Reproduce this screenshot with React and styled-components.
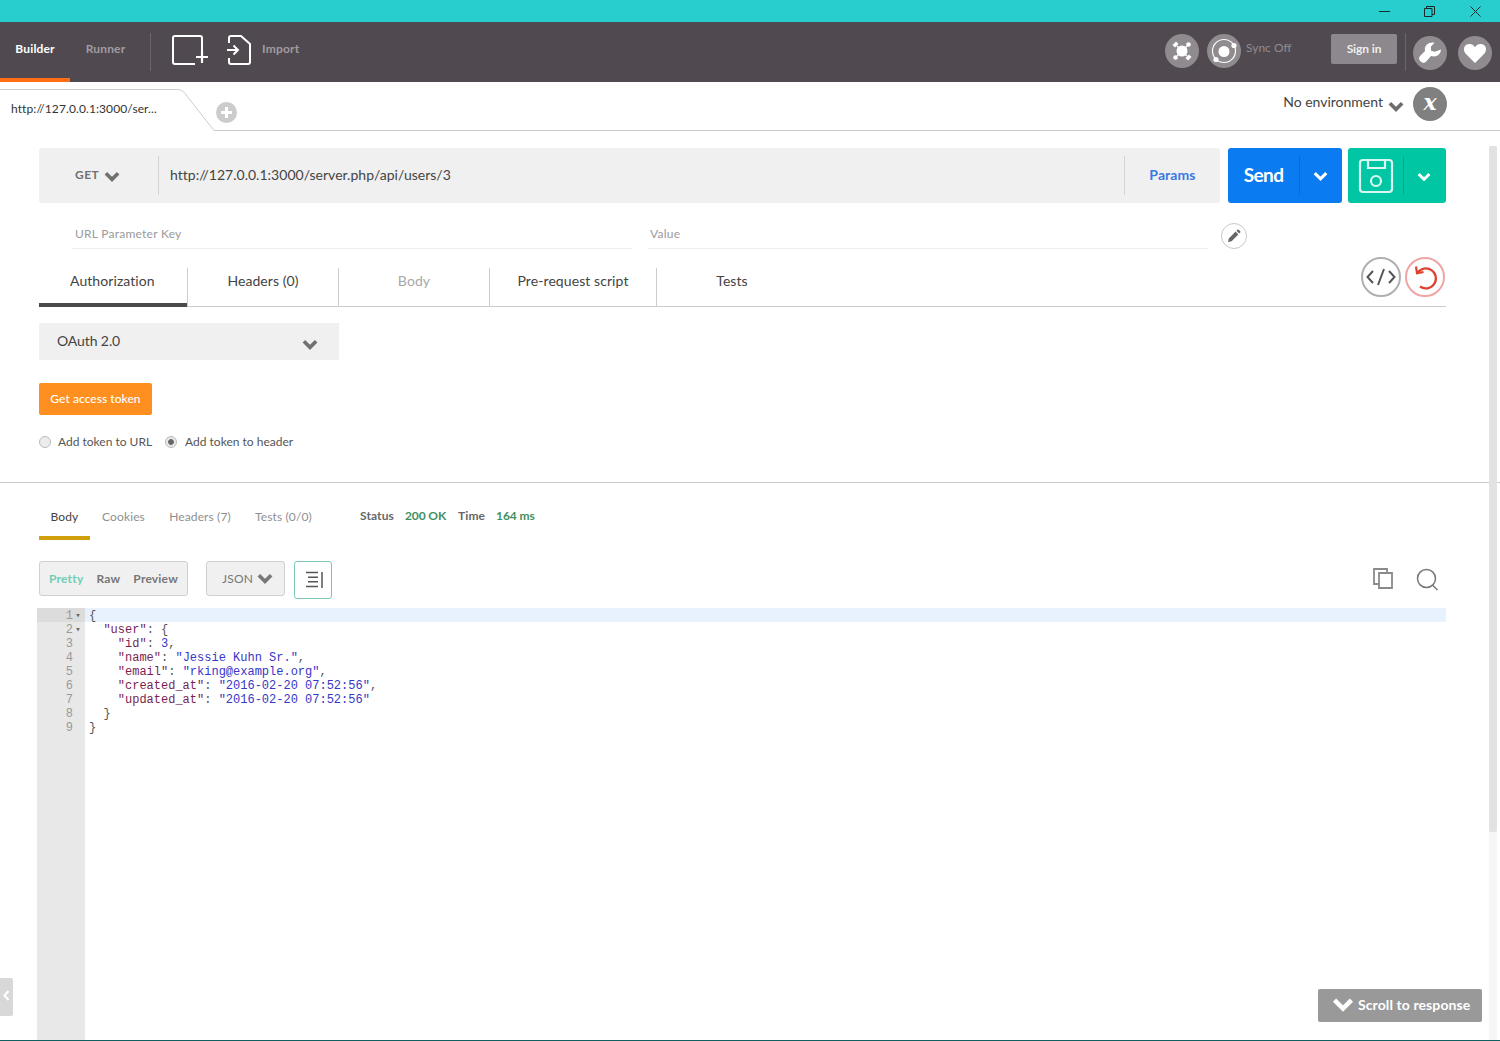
import React from "react";
import styled, { createGlobalStyle } from "styled-components";

const Global = createGlobalStyle`
  html, body { margin: 0; padding: 0; background: #fff; }
  body { font-family: Lato, "Open Sans", sans-serif; -webkit-font-smoothing: antialiased; }
  * { box-sizing: border-box; }
`;

const Page = styled.div`
  position: relative; width: 1500px; height: 1041px; overflow: hidden; background: #fff;
  display: flex; flex-direction: column; border-bottom: 1px solid #0f5f5f;
`;

/* Title bar */
const TitleBar = styled.div`
  height: 22px; flex: none; background: #28cdcd; display: flex; justify-content: flex-end; align-items: center;
`;
const WinBtn = styled.div`
  width: ${p => p.$w}px; height: 22px; display: flex; align-items: center; justify-content: center;
`;

/* Navigation */
const Nav = styled.header`
  height: 60px; flex: none; background: #504a50; display: flex; align-items: stretch; position: relative;
`;
const NavTab = styled.div`
  width: ${p => p.$w}px; height: 60px; display: flex; align-items: center; justify-content: center;
  padding-bottom: 4px; font-size: 12px; font-weight: 700; letter-spacing: .15px;
  color: ${p => (p.$active ? "#fff" : "#a09ca0")};
  border-bottom: 4px solid ${p => (p.$active ? "#ff6d14" : "transparent")};
`;
const NavDivider = styled.div`
  width: 1px; height: 38px; background: #6a656a; align-self: flex-start; margin: ${p => p.$t ?? 11}px ${p => p.$r || 0}px 0 ${p => p.$l || 0}px;
`;
const NavIconSlot = styled.div`
  display: flex; align-items: center; height: 56px; margin-left: ${p => p.$l || 0}px; color: #fff;
`;
const ImportLabel = styled.span`
  font-size: 12px; font-weight: 700; color: #a09ca0; margin-left: 11px; position: relative; top: -2px; letter-spacing: .2px;
`;
const NavRight = styled.div`
  margin-left: auto; display: flex; align-items: flex-start; padding-top: 12px; padding-right: 8px;
`;
const CircleBtn = styled.div`
  width: 34px; height: 34px; border-radius: 50%; background: ${p => p.$bg || "#8f8b8f"};
  display: flex; align-items: center; justify-content: center; flex: none;
  margin: ${p => p.$m || 0};
`;
const SyncLabel = styled.span`
  font-size: 12px; color: #8f8b8f; margin: 6px 40px 0 5px; width: 45px; white-space: nowrap;
`;
const SignIn = styled.div`
  width: 66px; height: 30px; border-radius: 2px; background: #8d888d; color: #eee; font-size: 12px; font-weight: 700;
  display: flex; align-items: center; justify-content: center; margin-right: 8px;
  padding-bottom: 1px; letter-spacing: -.1px;
`;

/* Tab strip */
const TabStrip = styled.div`
  height: 49px; flex: none; position: relative; display: flex; align-items: flex-start;
  border-bottom: 1px solid #ccc;
`;
const TabShape = styled.svg`
  position: absolute; left: 0; top: 7px;
`;
const TabLabel = styled.div`
  position: relative; margin: 20px 0 0 11px; width: 176px; font-size: 12px; color: #333; white-space: nowrap; line-height: 14px; letter-spacing: .1px;
`;
const AddTab = styled.div`
  position: relative; margin: 20px 0 0 29px; width: 21px; height: 21px; border-radius: 50%; background: #ccc;
  display: flex; align-items: center; justify-content: center;
`;
const EnvWrap = styled.div`
  margin-left: auto; display: flex; align-items: flex-start; padding: 5px 53px 0 0;
`;
const EnvText = styled.span`
  font-size: 14px; color: #444; margin: 6px 5px 0 0; line-height: 17px;
`;
const EnvChevron = styled.span`
  margin: 14px 9px 0 0; display: flex;
`;
const XGlyph = styled.span`
  color: #fff; font-family: "DejaVu Serif", serif; font-style: italic; font-weight: 700; font-size: 22px; line-height: 26px; position: relative; top: -2px;
`;

/* Main */
const Main = styled.main`
  padding: 17px 54px 0 39px; flex: none;
`;
const RequestRow = styled.div`
  display: flex; height: 55px;
`;
const UrlBar = styled.div`
  width: 1181px; background: #f0f0f0; border-radius: 3px; display: flex; align-items: center;
`;
const Method = styled.div`
  width: 120px; height: 39px; padding: 0 0 3px 36px; display: flex; align-items: center; font-size: 12px; font-weight: 700;
  color: #707070; letter-spacing: .5px; border-right: 1px solid #d4d4d4; gap: 5px;
`;
const MethodChevron = styled.span`
  display: flex; margin-top: 6px;
`;
const UrlText = styled.div`
  flex: 1; padding-left: 11px; font-size: 14px; color: #444; height: 39px; line-height: 37px; letter-spacing: .02px;
`;
const ParamsBtn = styled.div`
  width: 96px; height: 39px; line-height: 37px; border-left: 1px solid #d4d4d4; text-align: center;
  color: #3a78e4; font-weight: 700; font-size: 14px; letter-spacing: .1px;
`;
const SplitBtn = styled.div`
  width: ${p => p.$w}px; margin-left: ${p => p.$ml}px; background: ${p => p.$bg}; border-radius: 3px; display: flex; align-items: center;
  color: #fff;
`;
const SplitMain = styled.div`
  width: ${p => p.$w}px; height: 39px; border-right: 1px solid rgba(0,0,0,.14); display: flex; align-items: center; justify-content: center;
  font-weight: 700; font-size: 19px; letter-spacing: -.6px; padding-bottom: ${p => (p.$icon ? 0 : 2)}px;
`;
const SplitArrow = styled.div`
  flex: 1; display: flex; align-items: center; justify-content: center; padding: 2px 2px 0 0;
`;

const ParamRow = styled.div`
  display: flex; margin: 19px 0 0 33px; align-items: flex-start;
`;
const ParamField = styled.div`
  width: 560px; height: 27px; margin-right: 16px; border-bottom: 1px solid #eee; padding-left: ${p => p.$pl}px;
  font-size: 12px; color: #9a9a9a; line-height: 23px; letter-spacing: .25px;
`;
const EditBtn = styled.div`
  width: 26px; height: 26px; border-radius: 50%; border: 1px solid #c8c8c8; margin: 1px 0 0 -3px;
  display: flex; align-items: center; justify-content: center;
`;

const TabsBar = styled.div`
  display: flex; align-items: stretch; height: 39px; margin-top: 19px; border-bottom: 1px solid #ccc; position: relative;
`;
const ReqTab = styled.div`
  width: ${p => p.$w}px; font-size: 14px; display: flex; align-items: flex-start; justify-content: ${p => p.$left ? "flex-start" : "center"};
  padding-top: 4px; line-height: 17px; padding-left: ${p => p.$left || 0}px; letter-spacing: .08px;
  color: ${p => (p.$muted ? "#a8a8a8" : "#444")};
  border-right: ${p => (p.$noBorder ? "0" : "1px solid #ccc")};
  ${p => p.$active && "box-shadow: inset 0 -4px 0 #4a4a4a; margin-bottom: -1px;"}
`;
const TabTools = styled.div`
  margin-left: auto; display: flex; gap: 4px; padding-right: 1px; margin-top: -11px;
`;
const RoundTool = styled.div`
  width: 40px; height: 40px; border-radius: 50%; border: 2px solid ${p => p.$c}; display: flex; align-items: center; justify-content: center;
`;

const AuthSelect = styled.div`
  width: 300px; height: 37px; margin-top: 16px; background: #f0f0f0; display: flex; align-items: center; justify-content: space-between;
  padding: 0 21px 2px 18px; font-size: 14px; color: #444; letter-spacing: -.1px;
`;
const AuthChevron = styled.span`
  display: flex; margin-top: 9px;
`;
const TokenBtn = styled.div`
  width: 113px; height: 32px; margin-top: 23px; background: #ff901f; border-radius: 2px; color: #fff; font-size: 12px;
  display: flex; align-items: center; justify-content: center; font-weight: 500; padding-bottom: 2px; letter-spacing: .05px;
`;
const RadioRow = styled.div`
  display: flex; align-items: center; margin-top: 19px; height: 16px; font-size: 12px; color: #555;
`;
const Radio = styled.span`
  width: 12px; height: 12px; border-radius: 50%; border: 1px solid #bbb; background: ${p => p.$on ? "radial-gradient(circle, #666 0 2.5px, #e8e8e8 3.2px)" : "#ececec"};
  margin-right: ${p => p.$mr}px; flex: none;
`;
const RadioLabel = styled.span`
  margin-right: 13px; position: relative; top: -1px;
`;

const Divider = styled.div`
  height: 1px; background: #ccc; margin-top: 32px; flex: none;
`;

/* Response */
const Response = styled.section`
  flex: 1; min-height: 0; display: flex; flex-direction: column; padding-left: 39px; padding-right: 54px;
`;
const RespHead = styled.div`
  display: flex; height: 57px; align-items: flex-start; font-size: 12px;
`;
const RespTab = styled.div`
  height: 57px; padding-top: 26px; line-height: 15px; text-align: center; width: ${p => p.$w}px; letter-spacing: .12px;
  color: ${p => (p.$active ? "#444" : "#8f8f8f")};
  ${p => p.$active && "border-bottom: 4px solid #d09f0a;"}
`;
const StatusLabel = styled.span`
  margin-top: 25px; line-height: 15px; font-weight: 700; color: #666; margin-left: ${p => p.$l}px; letter-spacing: .1px;
`;
const StatusValue = styled.span`
  margin-top: 25px; line-height: 15px; font-weight: 700; color: #3f8f63; margin-left: ${p => p.$l}px; letter-spacing: -.1px;
`;
const ToolRow = styled.div`
  display: flex; align-items: flex-start; height: 47px; margin-top: 21px;
`;
const Segment = styled.div`
  width: ${p => p.$w}px; height: 35px; background: #f0f0f0; border: 1px solid #d0d0d0; border-radius: 3px; display: flex; align-items: center;
  font-size: 12px; font-weight: 700; color: #777; margin-right: ${p => p.$mr}px;
  padding-left: ${p => p.$pl}px; letter-spacing: .2px;
`;
const SegItem = styled.span`
  margin-right: ${p => p.$mr || 0}px; color: ${p => p.$c || "#777"}; font-weight: ${p => p.$fw || 700};
`;
const WrapBtn = styled.div`
  width: 38px; height: 38px; border-radius: 3px; border: 1px solid #7cc7b5; display: flex; align-items: center; justify-content: center;
`;
const ToolRight = styled.div`
  margin-left: auto; display: flex; align-items: flex-start; gap: 23px; margin-top: 7px; margin-right: 8px;
`;

const Editor = styled.div`
  flex: 1; display: flex; margin-left: -2px; font-family: "Liberation Mono", monospace; font-size: 12px; line-height: 14px; overflow: hidden;
`;
const Gutter = styled.div`
  width: 48px; flex: none; background: #e8e8e8; color: #999; font-size: 12px;
`;
const GutterLine = styled.div`
  height: 14px; display: flex; align-items: center; justify-content: flex-end; padding: 1px 2px 0 0;
  background: ${p => p.$on ? "#dcdcdc" : "transparent"};
`;
const Fold = styled.span`
  width: 10px; font-size: 9px; text-align: center; color: #666; line-height: 14px;
`;
const Code = styled.div`
  flex: 1;
`;
const CodeLine = styled.div`
  height: 14px; padding: 1px 0 0 4px; white-space: pre; color: #555; background: ${p => p.$on ? "#e8f2ff" : "transparent"};
`;
const Key = styled.span` color: #7a1f52; `;
const Str = styled.span` color: #3636c8; `;

const Scrollbar = styled.div`
  position: absolute; top: 146px; right: 3px; width: 8px; bottom: 0; background: #f6f6f6;
`;
const ScrollThumb = styled.div`
  height: 686px; background: #e2e2e2; border-radius: 2px;
`;
const ScrollTo = styled.div`
  position: absolute; left: 1318px; top: 989px; width: 164px; height: 33px; background: #999; border-radius: 2px;
  color: #fff; font-size: 14px; font-weight: 700; display: flex; align-items: center; padding: 0 0 2px 14px; gap: 4px; letter-spacing: .1px;
`;
const SideHandle = styled.div`
  position: absolute; left: 0; top: 978px; width: 13px; height: 38px; background: #d8d8d8; border-radius: 0 2px 2px 0;
  display: flex; align-items: center; justify-content: center; padding: 0 1px 4px 0;
`;

const Chevron = ({ s = 14, w = 3, c = "currentColor" }) => (
  <svg width={s} height={s * 0.7} viewBox="0 0 14 10" fill="none">
    <path d="M1.5 2 7 7.500 12.500 2" stroke={c} strokeWidth={w} />
  </svg>
);

const LINES = [
  <>{"{"}</>,
  <>{"  "}<Key>"user"</Key>: {"{"}</>,
  <>{"    "}<Key>"id"</Key>: <Str>3</Str>,</>,
  <>{"    "}<Key>"name"</Key>: <Str>"Jessie Kuhn Sr."</Str>,</>,
  <>{"    "}<Key>"email"</Key>: <Str>"rking@example.org"</Str>,</>,
  <>{"    "}<Key>"created_at"</Key>: <Str>"2016-02-20 07:52:56"</Str>,</>,
  <>{"    "}<Key>"updated_at"</Key>: <Str>"2016-02-20 07:52:56"</Str></>,
  <>{"  }"}</>,
  <>{"}"}</>,
];

export default function App() {
  return (
    <Page>
      <Global />
      <TitleBar>
        <WinBtn $w={48}>
          <svg width="11" height="11" viewBox="0 0 11 11"><path d="M0 5.500h11" stroke="#1a2a2a" strokeWidth="1" /></svg>
        </WinBtn>
        <WinBtn $w={42}>
          <svg width="11" height="11" viewBox="0 0 11 11" fill="none" stroke="#1a2a2a"><path d="M.5 2.500h7.500v8H.5zM2.500 2.500V.5h8v8H8" /></svg>
        </WinBtn>
        <WinBtn $w={50}>
          <svg width="11" height="11" viewBox="0 0 11 11" fill="none" stroke="#1a2a2a"><path d="M.5.5l10 10M10.500.5l-10 10" /></svg>
        </WinBtn>
      </TitleBar>

      <Nav>
        <NavTab $w={70} $active>Builder</NavTab>
        <NavTab $w={71}>Runner</NavTab>
        <NavDivider $l={9} />
        <NavIconSlot $l={21}>
          <svg width="37" height="30" viewBox="0 0 37 30" fill="none" stroke="#fff" strokeWidth="2">
            <path d="M30 18V3a2 2 0 0 0-2-2H3a2 2 0 0 0-2 2v24a2 2 0 0 0 2 2h20" />
            <path d="M24 22h12M30 16v12" strokeWidth="2.200" />
          </svg>
        </NavIconSlot>
        <NavIconSlot $l={18}>
          <svg width="24" height="30" viewBox="0 0 24 30" fill="none" stroke="#fff" strokeWidth="2">
            <path d="M2 8V3a2 2 0 0 1 2-2h10l9 8v18a2 2 0 0 1-2 2H4a2 2 0 0 1-2-2v-4" />
            <path d="M0 15h10M6.500 10.500l4.500 4.500-4.500 4.500" />
          </svg>
        </NavIconSlot>
        <NavIconSlot>
          <ImportLabel>Import</ImportLabel>
        </NavIconSlot>
        <NavRight>
          <CircleBtn>
            <svg width="26" height="26" viewBox="0 0 26 26" fill="#fff" stroke="#fff">
              <circle cx="13" cy="13" r="5.500" stroke="none" />
              <path d="M8 8l10 10M18 8 8 18" strokeWidth="1.400" />
              <path d="M3.500 7 7 3.500 9.500 6 6 9.500zM22.500 19 19 22.500 16.500 20l3.500-3.500z" stroke="none" />
              <circle cx="19.500" cy="6.500" r="2.300" stroke="none" />
              <circle cx="6.500" cy="19.500" r="2.300" stroke="none" />
            </svg>
          </CircleBtn>
          <CircleBtn $m="0 0 0 8px">
            <svg width="30" height="30" viewBox="0 0 30 30" fill="none">
              <circle cx="15" cy="15" r="11.500" stroke="#fff" strokeWidth="1.200" />
              <circle cx="15" cy="15.500" r="5.500" fill="#fff" />
              <circle cx="25" cy="9.500" r="2.600" fill="#fff" />
              <circle cx="7" cy="23.500" r="2.600" fill="#fff" />
            </svg>
          </CircleBtn>
          <SyncLabel>Sync Off</SyncLabel>
          <SignIn>Sign in</SignIn>
          <NavDivider $r={7} $t={-1} />
          <CircleBtn $m="2px 0 0 0">
            <svg width="26" height="26" viewBox="0 0 26 26">
              <path d="M24 9.500c0 2.200-1.200 4.800-3.400 6-2.300 1.300-4.800 1.100-6.600.6L9 21.800c-1.200 1.300-3.300 1.500-4.700.3L2.900 20.700c-1.200-1.300-1.100-3.400.2-4.600L8 11c-.5-2.300 0-4.700 1.900-6.400C11.800 2.800 14.800 2 17.500 2.700l-3.700 4.100.4 3.900 3.600 1.100z" fill="#fff" />
            </svg>
          </CircleBtn>
          <CircleBtn $m="2px 0 0 11px">
            <svg width="24" height="22" viewBox="0 0 24 22">
              <path d="M12 21 3 12C-.5 8.400.5 2.500 6 2c2.500-.2 4.800 1 6 3.300C13.200 3 15.500 1.800 18 2c5.500.5 6.500 6.400 3 10z" fill="#fff" />
            </svg>
          </CircleBtn>
        </NavRight>
      </Nav>

      <TabStrip>
        <TabShape width="216" height="43" viewBox="0 0 216 43" fill="none">
          <path d="M0 .5h177c4 0 6 1.500 8 4L214 41.500V42H0z" fill="#fff" />
          <path d="M0 .5h177c4 0 6 1.500 8 4L214 41.500" stroke="#ccc" />
        </TabShape>
        <TabLabel>http://127.0.0.1:3000/ser...</TabLabel>
        <AddTab>
          <svg width="13" height="13" viewBox="0 0 13 13"><path d="M6.500 1v11M1 6.500h11" stroke="#fff" strokeWidth="3" /></svg>
        </AddTab>
        <EnvWrap>
          <EnvText>No environment</EnvText>
          <EnvChevron><Chevron s={16} w={3.200} c="#6e6e6e" /></EnvChevron>
          <CircleBtn $bg="#808080"><XGlyph>x</XGlyph></CircleBtn>
        </EnvWrap>
      </TabStrip>

      <Main>
        <RequestRow>
          <UrlBar>
            <Method>GET <MethodChevron><Chevron s={16} w={3.200} c="#707070" /></MethodChevron></Method>
            <UrlText>http://127.0.0.1:3000/server.php/api/users/3</UrlText>
            <ParamsBtn>Params</ParamsBtn>
          </UrlBar>
          <SplitBtn $w={114} $ml={8} $bg="#0a7bf0">
            <SplitMain $w={72}>Send</SplitMain>
            <SplitArrow><Chevron s={15} c="#fff" /></SplitArrow>
          </SplitBtn>
          <SplitBtn $w={98} $ml={6} $bg="#00c6a4">
            <SplitMain $w={56} $icon>
              <svg width="36" height="36" viewBox="0 0 36 36" fill="none" stroke="#d8f7f0" strokeWidth="2.200">
                <rect x="2" y="2" width="32" height="32" rx="3" />
                <path d="M10 2v8h17V2" />
                <circle cx="18" cy="23" r="5" />
              </svg>
            </SplitMain>
            <SplitArrow><Chevron s={14} c="#fff" /></SplitArrow>
          </SplitBtn>
        </RequestRow>

        <ParamRow>
          <ParamField $pl={3}>URL Parameter Key</ParamField>
          <ParamField $pl={2}>Value</ParamField>
          <EditBtn>
            <svg width="14" height="14" viewBox="0 0 14 14" fill="#666">
              <path d="M1 13l.8-3.600 6.800-6.800 2.800 2.800-6.800 6.800zM9.400 1.800l1-1a1 1 0 0 1 1.400 0l1.400 1.400a1 1 0 0 1 0 1.400l-1 1z" />
            </svg>
          </EditBtn>
        </ParamRow>

        <TabsBar>
          <ReqTab $w={149} $active $left={31}>Authorization</ReqTab>
          <ReqTab $w={151}>Headers (0)</ReqTab>
          <ReqTab $w={151} $muted>Body</ReqTab>
          <ReqTab $w={167}>Pre-request script</ReqTab>
          <ReqTab $w={150} $noBorder>Tests</ReqTab>
          <TabTools>
            <RoundTool $c="#b0b0b0">
              <svg width="30" height="18" viewBox="0 0 30 18" fill="none" stroke="#555" strokeWidth="2">
                <path d="M7 3 1.500 9 7 15M23 3l5.500 6L23 15M18 1l-6 16" />
              </svg>
            </RoundTool>
            <RoundTool $c="#f0a5a5">
              <svg width="28" height="28" viewBox="0 0 28 28" fill="none" stroke="#e0402e" strokeWidth="2.200">
                <path d="M6.500 10A10 10 0 1 1 9 23.500M5 3.500l1 6.800 6.500-1.300" />
              </svg>
            </RoundTool>
          </TabTools>
        </TabsBar>

        <AuthSelect>
          OAuth 2.0
          <AuthChevron><Chevron s={16} w={3.200} c="#707070" /></AuthChevron>
        </AuthSelect>
        <TokenBtn>Get access token</TokenBtn>
        <RadioRow>
          <Radio $mr={7} />
          <RadioLabel>Add token to URL</RadioLabel>
          <Radio $on $mr={8} />
          <RadioLabel>Add token to header</RadioLabel>
        </RadioRow>
      </Main>

      <Divider />

      <Response>
        <RespHead>
          <RespTab $w={51} $active>Body</RespTab>
          <RespTab $w={67}>Cookies</RespTab>
          <RespTab $w={86}>Headers (7)</RespTab>
          <RespTab $w={81}>Tests (0/0)</RespTab>
          <StatusLabel $l={36}>Status</StatusLabel>
          <StatusValue $l={11}>200 OK</StatusValue>
          <StatusLabel $l={12}>Time</StatusLabel>
          <StatusValue $l={11}>164 ms</StatusValue>
        </RespHead>
        <ToolRow>
          <Segment $w={149} $mr={18} $pl={9}>
            <SegItem $c="#6fcdb0" $mr={13}>Pretty</SegItem>
            <SegItem $mr={13}>Raw</SegItem>
            <SegItem>Preview</SegItem>
          </Segment>
          <Segment $w={79} $mr={9} $pl={15}>
            <SegItem $mr={4} $fw={400}>JSON</SegItem>
            <Chevron s={16} w={3.200} c="#777" />
          </Segment>
          <WrapBtn>
            <svg width="20" height="18" viewBox="0 0 20 18" stroke="#555" strokeWidth="1.400">
              <path d="M3 1.500h12M5 6.200h10M5 10.800h10M3 15.500h12" />
              <path d="M19 1v16" strokeWidth="1.500" />
            </svg>
          </WrapBtn>
          <ToolRight>
            <svg width="20" height="21" viewBox="0 0 20 21" fill="#fff" stroke="#8a8a8a" strokeWidth="1.800">
              <path d="M1 1h13v15H1z" />
              <path d="M6 5h13v15H6z" />
            </svg>
            <svg width="22" height="23" viewBox="0 0 22 23" fill="none" stroke="#777" strokeWidth="1.500">
              <circle cx="10.500" cy="10.500" r="9" />
              <path d="m16.500 17 5 5" />
            </svg>
          </ToolRight>
        </ToolRow>
        <Editor>
          <Gutter>
            {LINES.map((_, i) => (
              <GutterLine key={i} $on={i === 0}>
                {i + 1}
                <Fold>{i < 2 ? "▾" : ""}</Fold>
              </GutterLine>
            ))}
          </Gutter>
          <Code>
            {LINES.map((l, i) => (
              <CodeLine key={i} $on={i === 0}>{l}</CodeLine>
            ))}
          </Code>
        </Editor>
      </Response>

      <Scrollbar><ScrollThumb /></Scrollbar>
      <ScrollTo><Chevron s={22} w={3} c="#fff" />Scroll to response</ScrollTo>
      <SideHandle>
        <svg width="7" height="11" viewBox="0 0 7 11" fill="none"><path d="M5.500 1 1.500 5.500l4 4.500" stroke="#fff" strokeWidth="2" /></svg>
      </SideHandle>
    </Page>
  );
}
